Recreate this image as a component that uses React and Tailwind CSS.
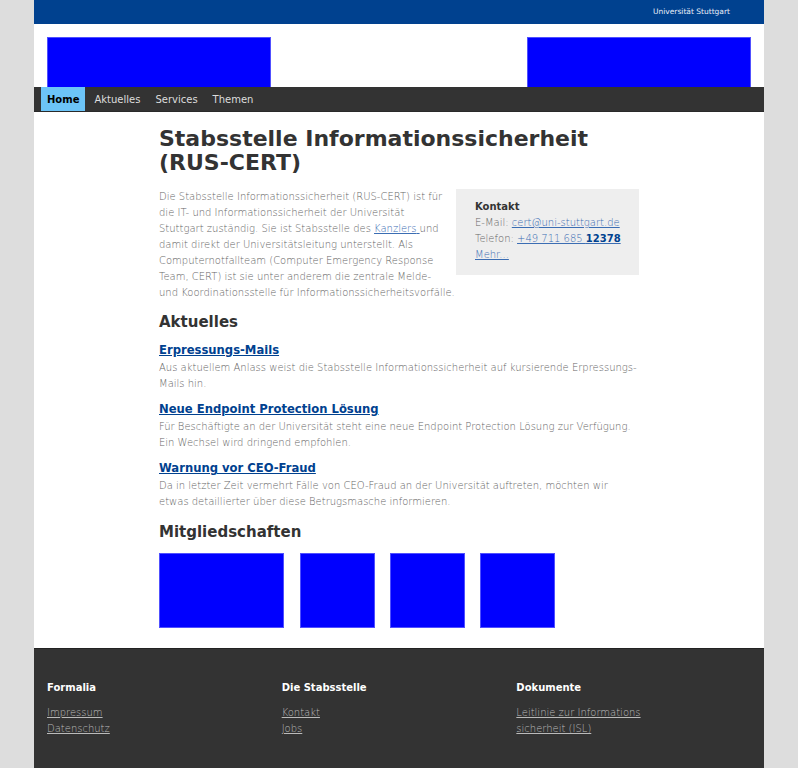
import React from 'react'

const font = { fontFamily: '"DejaVu Sans", Verdana, sans-serif' }

const news = [
  {
    title: 'Erpressungs-Mails',
    text: 'Aus aktuellem Anlass weist die Stabsstelle Informationssicherheit auf kursierende Erpressungs-Mails hin.',
  },
  {
    title: 'Neue Endpoint Protection Lösung',
    text: 'Für Beschäftigte an der Universität steht eine neue Endpoint Protection Lösung zur Verfügung. Ein Wechsel wird dringend empfohlen.',
  },
  {
    title: 'Warnung vor CEO-Fraud',
    text: 'Da in letzter Zeit vermehrt Fälle von CEO-Fraud an der Universität auftreten, möchten wir etwas detaillierter über diese Betrugsmasche informieren.',
  },
]

const footerCols = [
  { title: 'Formalia', links: ['Impressum', 'Datenschutz'] },
  { title: 'Die Stabsstelle', links: ['Kontakt', 'Jobs'] },
  { title: 'Dokumente', links: ['Leitlinie zur Informations sicherheit (ISL)'] },
]

const navItems = ['Home', 'Aktuelles', 'Services', 'Themen']

export default function App() {
  return (
    <div className="min-h-screen bg-[#dddddd]" style={font}>
      <div className="mx-auto w-[730px] bg-white">
        {/* top bar */}
        <div className="flex h-[24px] items-center justify-end bg-[#00418f] pr-[34px]">
          <span className="text-[7.5px] leading-none text-[#e8eef8]">Universität Stuttgart</span>
        </div>

        {/* logos */}
        <div className="flex justify-between px-[13px] pt-[13px]">
          <div className="h-[50px] w-[224px] border border-b-0 border-[#5050ff] bg-[#0000ff]" />
          <div className="h-[50px] w-[224px] border border-b-0 border-[#5050ff] bg-[#0000ff]" />
        </div>

        {/* nav */}
        <nav className="flex h-[25px] items-stretch gap-[3px] border-b border-[#2a2a2a] bg-[#333333] pl-[7px]">
          {navItems.map((item, i) => (
            <a
              key={item}
              href="#"
              className={`flex items-center px-[6px] text-[10px] ${
                i === 0 ? 'bg-[#6cc4f7] font-bold text-black' : 'text-[#dddddd]'
              }`}
            >
              {item}
            </a>
          ))}
        </nav>

        {/* content */}
        <main className="mx-auto w-[480px] pt-[15px] pb-[20px]">
          <h1 className="text-[22px] font-bold leading-[23.5px] text-[#333333]">
            Stabsstelle Informationssicherheit (RUS-CERT)
          </h1>

          <div className="mt-[15px] flow-root">
            <div className="float-right ml-[12px] w-[183px] bg-[#eeeeee] pt-[10px] pr-[8px] pb-[12px] pl-[19px] text-[10px] font-light leading-[16px] text-[#666666]">
              <div className="font-bold text-[#333333]">Kontakt</div>
              <div>
                E-Mail:{' '}
                <a href="#" className="text-[#3b6db3] underline">
                  cert@uni-stuttgart.de
                </a>
              </div>
              <div>
                Telefon:{' '}
                <a href="#" className="text-[#3b6db3] underline">
                  +49 711 685 <b className="font-bold text-[#00418f]">12378</b>
                </a>
              </div>
              <a href="#" className="text-[#3b6db3] underline">
                Mehr...
              </a>
            </div>
            <p className="text-[10px] font-light leading-[16px] text-[#666666]">
              Die Stabsstelle Informationssicherheit (RUS-CERT) ist für die IT- und Informationssicherheit der
              Universität Stuttgart zuständig. Sie ist Stabsstelle des{' '}
              <a href="#" className="text-[#3b6db3] underline">
                Kanzlers{' '}
              </a>
              und damit direkt der Universitätsleitung unterstellt. Als Computernotfallteam (Computer Emergency
              Response Team, CERT) ist sie unter anderem die zentrale Melde- und Koordinationsstelle für
              Informationssicherheitsvorfälle.
            </p>
          </div>

          <h2 className="mt-[11px] text-[15px] font-bold leading-[20px] text-[#333333]">Aktuelles</h2>
          <div className="mt-[9px] flex flex-col gap-[8px]">
            {news.map((n) => (
              <div key={n.title}>
                <a href="#" className="block text-[11.6px] font-bold leading-[19px] text-[#00418f] underline">
                  {n.title}
                </a>
                <p className="text-[10px] font-light leading-[16px] text-[#666666]">{n.text}</p>
              </div>
            ))}
          </div>

          <h2 className="mt-[12px] text-[15px] font-bold leading-[20px] text-[#333333]">Mitgliedschaften</h2>
          <div className="mt-[11px] flex gap-[15px]">
            <div className="mr-px h-[75px] w-[125px] border border-[#5050ff] bg-[#0000ff]" />
            <div className="h-[75px] w-[75px] border border-[#5050ff] bg-[#0000ff]" />
            <div className="h-[75px] w-[75px] border border-[#5050ff] bg-[#0000ff]" />
            <div className="h-[75px] w-[75px] border border-[#5050ff] bg-[#0000ff]" />
          </div>
        </main>

        {/* footer */}
        <footer className="grid grid-cols-3 border-t border-[#222222] bg-[#333333] px-[13px] pt-[31px] pb-[40px]">
          {footerCols.map((col) => (
            <div key={col.title} className="pr-[20px]">
              <div className="text-[10px] font-bold leading-[16px] text-white">{col.title}</div>
              <ul className="mt-[9px] w-[140px] text-[10px] font-light leading-[16px]">
                {col.links.map((l) => (
                  <li key={l}>
                    <a href="#" className="text-[#bbbbbb] underline">
                      {l}
                    </a>
                  </li>
                ))}
              </ul>
            </div>
          ))}
        </footer>
      </div>
    </div>
  )
}
